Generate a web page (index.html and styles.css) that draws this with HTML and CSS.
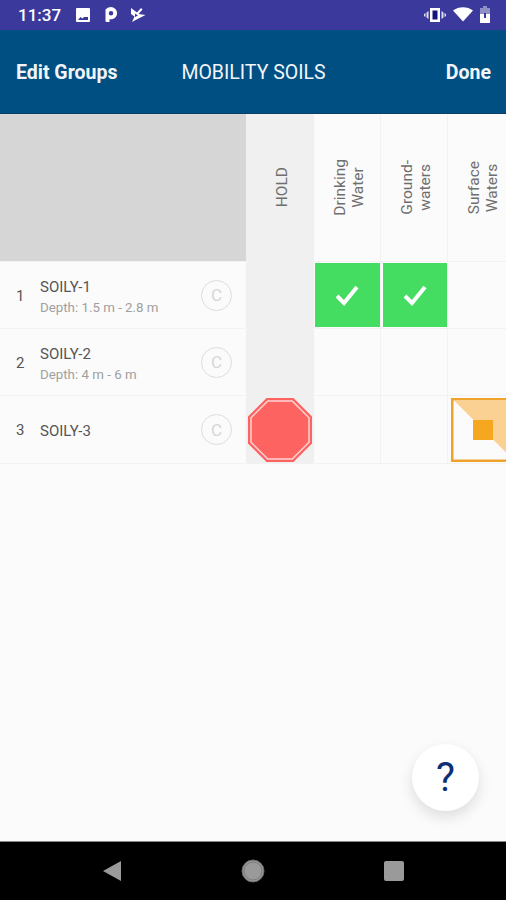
FILE: index.html
```html
<!DOCTYPE html>
<html>
<head>
<meta charset="utf-8" />
<title>Mobility Soils</title>
<link rel="stylesheet" href="styles.css">
</head>
<body>
<div class="phone">
	<div class="status">
		<span class="time">11:37</span>
		<svg width="16" height="16" viewBox="0 0 16 16"><path fill="#fff" d="M2 1h12a1 1 0 0 1 1 1v12a1 1 0 0 1-1 1H2a1 1 0 0 1-1-1V2a1 1 0 0 1 1-1z"/><path fill="#3b399c" d="M3 13l2.500-3 2 1.500 1.500-1.500h4v3z"/></svg>
		<svg width="14" height="17" viewBox="0 0 14 17"><path fill="#fff" fill-rule="evenodd" d="M7 1a6.200 6.200 0 0 1 1 12.300H5.500V16H2.500a1 1 0 0 1-1-1V3.500A6.500 6.500 0 0 1 7 1zm0 4a2.200 2.200 0 1 0 0 4.500A2.200 2.200 0 0 0 7 5z"/></svg>
		<svg width="15" height="16" viewBox="0 0 15 16"><path fill="#fff" d="M0 1l6 4.500L10 1l1.500 1.500L7.500 7l7 1-7 3.500L1 15l2.500-5.500L0 7z"/><path fill="#3b399c" d="M4 6.500l3 2-3 1.500z"/></svg>
		<span class="st_gap"></span>
		<svg width="22" height="16" viewBox="0 0 22 16"><path fill="#fff" d="M6 1h10v14H6z"/><path fill="#16167a" d="M8.500 3.500h5v9h-5z"/><path fill="#dfdff2" d="M4.500 4v8L2.500 10.500v-5zM17.500 4v8l2-1.500v-5zM1.500 6v4L0 9V7zM20.500 6v4l1.500-1V7z"/></svg>
		<svg class="st_wifi" width="20" height="15" viewBox="0 0 20 15"><path fill="#fff" d="M10 14.500L0 3.500C5.500-1 14.500-1 20 3.500z"/></svg>
		<svg class="st_batt" width="12" height="18" viewBox="0 0 12 18"><path fill="#8f8fc8" d="M4 0h4v2h3v7H1V2h3z"/><path fill="#fff" d="M1 8h10v9H1z"/><path fill="#3b399c" d="M5 7h2v5H5z"/></svg>
	</div>
	<div class="header">
		<span class="head_btn">Edit Groups</span>
		<span class="head_title">MOBILITY SOILS</span>
		<span class="head_btn head_done">Done</span>
	</div>
	<div class="main">
		<div class="grid">
			<div class="row row_head">
				<div class="corner"></div>
				<div class="cell cell_hold"><span class="vtext">HOLD</span></div>
				<div class="cell"><span class="vtext">Drinking<br>Water</span></div>
				<div class="cell"><span class="vtext">Ground-<br>waters</span></div>
				<div class="cell"><span class="vtext">Surface<br>Waters</span></div>
			</div>
			<div class="row">
				<div class="sample">
					<span class="num">1</span>
					<div class="info"><div class="name">SOILY-1</div><div class="depth">Depth: 1.5 m - 2.8 m</div></div>
					<span class="badge">C</span>
				</div>
				<div class="cell cell_hold"></div>
				<div class="cell"><div class="ok"><svg width="24" height="22" viewBox="0 0 24 22"><path fill="none" stroke="#fff" stroke-width="4" d="M2 12l7 7L22 3"/></svg></div></div>
				<div class="cell"><div class="ok ok_b"><svg width="24" height="22" viewBox="0 0 24 22"><path fill="none" stroke="#fff" stroke-width="4" d="M2 12l7 7L22 3"/></svg></div></div>
				<div class="cell"></div>
			</div>
			<div class="row">
				<div class="sample">
					<span class="num">2</span>
					<div class="info"><div class="name">SOILY-2</div><div class="depth">Depth: 4 m - 6 m</div></div>
					<span class="badge">C</span>
				</div>
				<div class="cell cell_hold"></div>
				<div class="cell"></div>
				<div class="cell"></div>
				<div class="cell"></div>
			</div>
			<div class="row row_last">
				<div class="sample">
					<span class="num">3</span>
					<div class="info"><div class="name">SOILY-3</div></div>
					<span class="badge">C</span>
				</div>
				<div class="cell cell_hold">
					<svg class="stop" width="66" height="66" viewBox="0 0 66 66"><path fill="#fd6361" d="M19.500 1h27L65 19.500v27L46.500 65h-27L1 46.500v-27z"/><path fill="none" stroke="#fdd5d3" stroke-width="1.500" d="M20.800 4h24.400L62 20.800v24.400L45.200 62H20.800L4 45.200V20.800z"/></svg>
				</div>
				<div class="cell"></div>
				<div class="cell"></div>
				<div class="cell cell_warn">
					<svg class="warn" width="55" height="65" viewBox="0 0 55 65"><rect x="1.250" y="1.250" width="70" height="61.500" fill="#fbfbfb" stroke="#f0a32c" stroke-width="2.500"/><path fill="#fad193" d="M3 2.500h52v52z"/><rect x="22" y="22" width="20" height="20" fill="#f5a81f"/></svg>
				</div>
			</div>
		</div>
		<div class="fab">?</div>
	</div>
	<div class="navbar">
		<svg width="20" height="22" viewBox="0 0 20 22"><path fill="#9a9a9a" d="M19 1v20L1 11z"/></svg>
		<svg width="24" height="24" viewBox="0 0 24 24"><circle cx="12" cy="12" r="11" fill="#9a9a9a" stroke="#6a6a6a" stroke-width="1"/><circle cx="12" cy="12" r="9" fill="none" stroke="#7a7a7a" stroke-width="1"/></svg>
		<svg width="20" height="20" viewBox="0 0 20 20"><rect width="20" height="20" rx="2" fill="#9a9a9a"/></svg>
	</div>
</div>
</body>
</html>
```
FILE: styles.css
```css
* { padding: 0; margin: 0; box-sizing: border-box; }
body { background: #fbfbfb; font-family: Roboto, "Liberation Sans", sans-serif; overflow: hidden; }
.phone { width: 506px; height: 900px; display: flex; flex-direction: column; overflow: hidden; }

.status { height: 30px; background: #3b399c; color: #fff; display: flex; align-items: center; gap: 13px; padding: 0 15px 1px 18px; font-size: 17px; font-weight: 500; }
.time { margin-right: 1px; }
.st_gap { flex: 1; }
.st_wifi { margin-left: -6px; }
.st_batt { margin-left: -7px; }

.header { height: 84px; background: #004f83; border-bottom: 1px solid #0b3f66; color: #f2f5f8; display: grid; grid-template-columns: 1fr auto 1fr; align-items: center; padding: 2px 15px 0 16px; }
.head_btn { font-size: 19.500px; font-weight: 700; }
.head_done { text-align: right; }
.head_title { font-size: 19.500px; }

.main { flex: 1; position: relative; }
.row { display: flex; height: 67px; border-bottom: 1px solid #f2f2f2; }
.row_head { height: 148px; }
.row_last { height: 68px; }
.corner { width: 246px; flex: none; background: #d6d6d6; }
.sample { width: 246px; flex: none; display: flex; align-items: center; padding: 0 14px 0 16px; color: #555; }
.num { width: 24px; font-size: 15px; padding-top: 1px; }
.info { flex: 1; padding-top: 4px; }
.name { font-size: 15px; line-height: 21px; color: #555; }
.depth { font-size: 13.300px; line-height: 20px; color: #a0a0a0; }
.badge { width: 31px; height: 31px; border: 1px solid #ddd; border-radius: 50%; color: #d6d6d6; font-size: 17px; display: flex; align-items: center; justify-content: center; }

.cell { width: 67px; flex: none; display: flex; align-items: center; justify-content: center; border-right: 1px solid #f2f2f2; }
.cell_hold { width: 68px; background: #f0f0f0; border-right: 0; }
.cell_warn { justify-content: flex-start; align-items: flex-start; padding: 2px 0 0 3px; overflow: hidden; }
.vtext { writing-mode: vertical-rl; transform: rotate(180deg); font-size: 15.500px; line-height: 18px; color: #6e6e6e; text-align: center; margin-left: 3px; }
.ok { width: 65px; height: 64px; background: #45dc62; display: flex; align-items: center; justify-content: center; }
.ok_b { width: 64px; margin-left: 1px; }
.stop { flex: none; }
.warn { flex: none; }

.fab { position: absolute; left: 412px; top: 630px; width: 67px; height: 67px; border-radius: 50%; background: #fff; box-shadow: 0 6px 14px rgba(0,0,0,0.12); color: #0c2f77; font-size: 40px; line-height: 67px; text-align: center; }

.navbar { height: 59px; background: #000; border-top: 1px solid #888; display: flex; align-items: center; padding: 0 102px; justify-content: space-between; }
```
